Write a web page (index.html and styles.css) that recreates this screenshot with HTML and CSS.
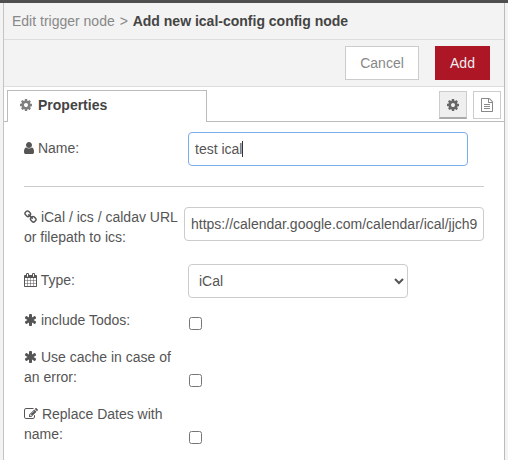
FILE: index.html
```html
<!DOCTYPE html>
<html lang="en">
<head>
<meta charset="utf-8">
<title>Add new ical-config config node</title>
<link rel="stylesheet" href="styles.css">
</head>
<body>
<svg class="sprite" aria-hidden="true">
  <symbol id="cog" viewBox="128 0 1536 1792"><path d="M1152 896q0-106-75-181t-181-75-181 75-75 181 75 181 181 75 181-75 75-181zm512-109v222q0 12-8 23t-20 13l-185 28q-19 54-39 91 35 50 107 138 10 12 10 25t-9 23q-27 37-99 108t-94 71q-12 0-26-9l-138-108q-44 23-91 38-16 136-29 186-7 28-36 28h-222q-14 0-24.500-8.500t-11.500-21.500l-28-184q-49-16-90-37l-141 107q-10 9-25 9-14 0-25-11-126-114-165-168-7-10-7-23 0-12 8-23 15-21 51-66.500t54-70.500q-27-50-41-99l-183-27q-13-2-21-12.500t-8-23.500v-222q0-12 8-23t19-13l186-28q14-46 39-92-40-57-107-138-10-12-10-24 0-10 9-23 26-36 98.500-107.500t94.500-71.500q13 0 26 10l138 107q44-23 91-38 16-136 29-186 7-28 36-28h222q14 0 24.500 8.500t11.500 21.500l28 184q49 16 90 37l142-107q9-9 24-9 13 0 25 10 129 119 165 170 7 8 7 22 0 12-8 23-15 21-51 66.500t-54 70.500q26 50 41 98l183 28q13 2 21 12.500t8 23.500z"/></symbol>
  <symbol id="file" viewBox="128 0 1536 1792"><path d="M1596 380q28 28 48 76t20 88v1152q0 40-28 68t-68 28h-1344q-40 0-68-28t-28-68v-1600q0-40 28-68t68-28h896q40 0 88 20t76 48zm-444-244v376h376q-10-29-22-41l-313-313q-12-12-41-22zm384 1528v-1024h-416q-40 0-68-28t-28-68v-416h-768v1536h1280zm-1024-864q0-14 9-23t23-9h704q14 0 23 9t9 23v64q0 14-9 23t-23 9h-704q-14 0-23-9t-9-23v-64zm736 224q14 0 23 9t9 23v64q0 14-9 23t-23 9h-704q-14 0-23-9t-9-23v-64q0-14 9-23t23-9h704zm0 256q14 0 23 9t9 23v64q0 14-9 23t-23 9h-704q-14 0-23-9t-9-23v-64q0-14 9-23t23-9h704z"/></symbol>
  <symbol id="user" viewBox="256 0 1280 1792"><path d="M1536 1399q0 109-62.500 187t-150.500 78h-854q-88 0-150.500-78t-62.500-187q0-85 8.500-160.500t31.500-152 58.500-131 94-89 134.500-34.500q131 128 313 128t313-128q76 0 134.500 34.500t94 89 58.500 131 31.500 152 8.500 160.500zm-256-887q0 159-112.500 271.500t-271.500 112.500-271.500-112.500-112.500-271.500 112.500-271.500 271.500-112.500 271.500 112.500 112.500 271.500z"/></symbol>
  <symbol id="chain" viewBox="64 0 1664 1792"><path d="M1520 1216q0-40-28-68l-208-208q-28-28-68-28-42 0-72 32 3 3 19 18.500t21.500 21.500 15 19 13 25.500 3.500 27.500q0 40-28 68t-68 28q-15 0-27.500-3.500t-25.500-13-19-15-21.500-21.500-18.500-19q-33 31-33 73 0 40 28 68l206 207q27 27 68 27 40 0 68-26l147-146q28-28 28-67zm-703-705q0-40-28-68l-206-207q-28-28-68-28-39 0-68 27l-147 146q-28 28-28 67 0 40 28 68l208 208q27 27 68 27 42 0 72-31-3-3-19-18.500t-21.500-21.500-15-19-13-25.500-3.500-27.500q0-40 28-68t68-28q15 0 27.500 3.500t25.500 13 19 15 21.500 21.500 18.500 19q33-31 33-73zm895 705q0 120-85 203l-147 146q-83 83-203 83-121 0-204-85l-206-207q-83-83-83-203 0-123 88-209l-88-88q-86 88-208 88-120 0-204-84l-208-208q-84-84-84-204t85-203l147-146q83-83 203-83 121 0 204 85l206 207q83 83 83 203 0 123-88 209l88 88q86-88 208-88 120 0 204 84l208 208q84 84 84 204z"/></symbol>
  <symbol id="calendar" viewBox="64 0 1664 1792"><path d="M192 1664h288v-288h-288v288zm352 0h320v-288h-320v288zm-352-352h288v-320h-288v320zm352 0h320v-320h-320v320zm-352-384h288v-288h-288v288zm736 736h320v-288h-320v288zm-384-736h320v-288h-320v288zm768 736h288v-288h-288v288zm-384-352h320v-320h-320v320zm-352-864v-288q0-13-9.500-22.500t-22.500-9.500h-64q-13 0-22.500 9.500t-9.500 22.500v288q0 13 9.500 22.500t22.500 9.500h64q13 0 22.500-9.500t9.500-22.500zm736 864h288v-320h-288v320zm-384-384h320v-288h-320v288zm384 0h288v-288h-288v288zm32-480v-288q0-13-9.500-22.500t-22.500-9.500h-64q-13 0-22.500 9.500t-9.500 22.500v288q0 13 9.500 22.500t22.500 9.500h64q13 0 22.500-9.500t9.500-22.500zm384-64v1280q0 52-38 90t-90 38h-1408q-52 0-90-38t-38-90v-1280q0-52 38-90t90-38h128v-96q0-66 47-113t113-47h64q66 0 113 47t47 113v96h384v-96q0-66 47-113t113-47h64q66 0 113 47t47 113v96h128q52 0 90 38t38 90z"/></symbol>
  <symbol id="asterisk" viewBox="64 0 1664 1792"><path d="M1546 1050q46 26 59.500 77.500t-12.500 97.500l-64 110q-26 46-77.500 59.500t-97.500-12.500l-266-153v307q0 52-38 90t-90 38h-128q-52 0-90-38t-38-90v-307l-266 153q-46 26-97.500 12.500t-77.500-59.500l-64-110q-26-46-12.500-97.500t59.500-77.500l266-154-266-154q-46-26-59.500-77.500t12.500-97.500l64-110q26-46 77.500-59.500t97.500 12.500l266 153v-307q0-52 38-90t90-38h128q52 0 90 38t38 90v307l266-153q46-26 97.500-12.500t77.500 59.500l64 110q26 46 12.500 97.500t-59.500 77.500l-266 154z"/></symbol>
  <symbol id="edit" viewBox="0 0 1792 1792"><path d="M888 1184l116-116-152-152-116 116v56h96v96h56zm440-720q-16-16-33 1l-350 350q-17 17-1 33t33-1l350-350q17-17 1-33zm80 594v190q0 119-84.500 203.500t-203.500 84.500h-832q-119 0-203.500-84.500t-84.500-203.500v-832q0-119 84.500-203.500t203.500-84.500h832q63 0 117 25 15 7 18 23 3 17-9 29l-49 49q-14 14-32 8-23-6-45-6h-832q-66 0-113 47t-47 113v832q0 66 47 113t113 47h832q66 0 113-47t47-113v-126q0-13 9-22l64-64q15-15 35-7t20 29zm-96-738l288 288-672 672h-288v-288zm444 132l-92 92-288-288 92-92q28-28 68-28t68 28l152 152q28 28 28 68t-28 68z"/></symbol>
</svg>
<div class="tray">
  <header class="breadcrumb"><span>Edit trigger node</span> <span class="sep">&gt;</span> <b>Add new ical-config config node</b></header>
  <div class="toolbar">
    <button class="btn">Cancel</button>
    <button class="btn primary">Add</button>
  </div>
  <div class="tabs">
    <div class="tab"><svg class="icon w12"><use href="#cog"/></svg><span>Properties</span></div>
    <div class="tab-actions">
      <button class="mini selected"><svg class="icon w12"><use href="#cog"/></svg></button>
      <button class="mini"><svg class="icon w12"><use href="#file"/></svg></button>
    </div>
  </div>
  <form class="form">
    <div class="row name-row">
      <label><svg class="icon w10"><use href="#user"/></svg> Name:</label>
      <div class="field focused" role="textbox">test ical<i class="caret"></i></div>
    </div>
    <hr>
    <div class="row url-row">
      <label>
        <svg class="icon w13"><use href="#chain"/></svg> iCal / ics / caldav URL<br>or filepath to ics:</label>
      <div class="field url" role="textbox">https://calendar.google.com/calendar/ical/jjch9</div>
    </div>
    <div class="row type-row">
      <label><svg class="icon w13"><use href="#calendar"/></svg> Type:</label>
      <select class="field select"><option>iCal</option></select>
    </div>
    <div class="row check-row">
      <label><svg class="icon w13"><use href="#asterisk"/></svg> include Todos:</label>
      <input type="checkbox">
    </div>
    <div class="row check-row">
      <label><svg class="icon w13"><use href="#asterisk"/></svg> Use cache in case of<br>an error:</label>
      <input type="checkbox">
    </div>
    <div class="row check-row">
      <label><svg class="icon w14"><use href="#edit"/></svg> Replace Dates with<br>name:</label>
      <input type="checkbox">
    </div>
  </form>
</div>
</body>
</html>
```
FILE: styles.css
```css
* { box-sizing: border-box; }
body {
  margin: 0;
  height: 460px;
  overflow: hidden;
  border-top: 3px solid #4f4f4f;
  padding: 0 3px;
  background: #f3f3f3;
  color: #555;
  font: 14px/20px "Liberation Sans", Arial, sans-serif;
}
button, select { font: inherit; color: inherit; }
.sprite { display: none; }
.tray {
  height: 457px;
  background: #fff;
  border-left: 1px solid #c4c4c4;
  border-right: 1px solid #bbb;
}
.breadcrumb {
  height: 37px;
  padding: 8px 8px 0;
  background: #f3f3f3;
  border-bottom: 1px solid #ddd;
  color: #888;
  white-space: nowrap;
}
.breadcrumb .sep { margin: 0 1px; }
.breadcrumb b { color: #444; }
.toolbar {
  display: flex;
  justify-content: flex-end;
  gap: 16px;
  height: 47px;
  padding: 6px 14px 0 0;
  background: #f3f3f3;
  border-bottom: 1px solid #ddd;
}
.btn {
  width: 74px;
  height: 34px;
  padding: 0;
  border: 1px solid #ccc;
  background: #fff;
  color: #888;
}
.btn.primary {
  width: 55px;
  border-color: #ad1625;
  background: #ad1625;
  color: #eee;
}
.icon {
  display: inline-block;
  height: 14px;
  vertical-align: -2px;
  fill: currentColor;
}
.w10 { width: 10px; }
.w12 { width: 12px; }
.w13 { width: 13px; }
.w14 { width: 14px; }
.tabs {
  display: flex;
  justify-content: space-between;
  height: 35px;
  padding: 3px 3px 0;
  box-shadow: inset 0 -1px #bbb;
}
.tab {
  display: flex;
  align-items: center;
  gap: 6px;
  width: 200px;
  height: 32px;
  padding: 0 12px 3px;
  border: 1px solid #bbb;
  border-bottom: 0;
  background: #fff;
  color: #444;
  font-weight: bold;
}
.tab .icon { color: #808080; }
.tab-actions { display: flex; gap: 6px; padding: 1px 0; }
.mini {
  display: flex;
  align-items: center;
  justify-content: center;
  width: 28px;
  height: 28px;
  padding: 0;
  border: 1px solid #ccc;
  background: #fff;
  color: #888;
}
.mini.selected {
  padding-top: 1px;
  border-bottom: 2px solid #aaa;
  background: #efefef;
  color: #666;
}
.form { padding: 10px 20px 0; }
.row { display: flex; align-items: flex-start; }
.row label { flex: none; width: 164px; white-space: nowrap; }
.name-row label, .type-row label { padding-top: 6px; }
.field {
  width: 280px;
  height: 34px;
  padding: 6px;
  border: 1px solid #ccc;
  border-radius: 4px;
  background: #fff;
  white-space: nowrap;
}
.focused { border-color: #78aeea; }
.caret {
  display: inline-block;
  width: 1px;
  height: 16px;
  background: #333;
  vertical-align: -3px;
}
hr { margin: 20px 0; border: 0; border-top: 1px solid #ccc; }
.url-row label { width: 160px; }
.url { width: 300px; }
.type-row { margin: 17px 0 12px; }
.select { width: 220px; }
.check-row { align-items: flex-end; margin-bottom: 17px; }
.check-row input { width: 13px; height: 13px; margin: 0 0 0 1px; }
```
